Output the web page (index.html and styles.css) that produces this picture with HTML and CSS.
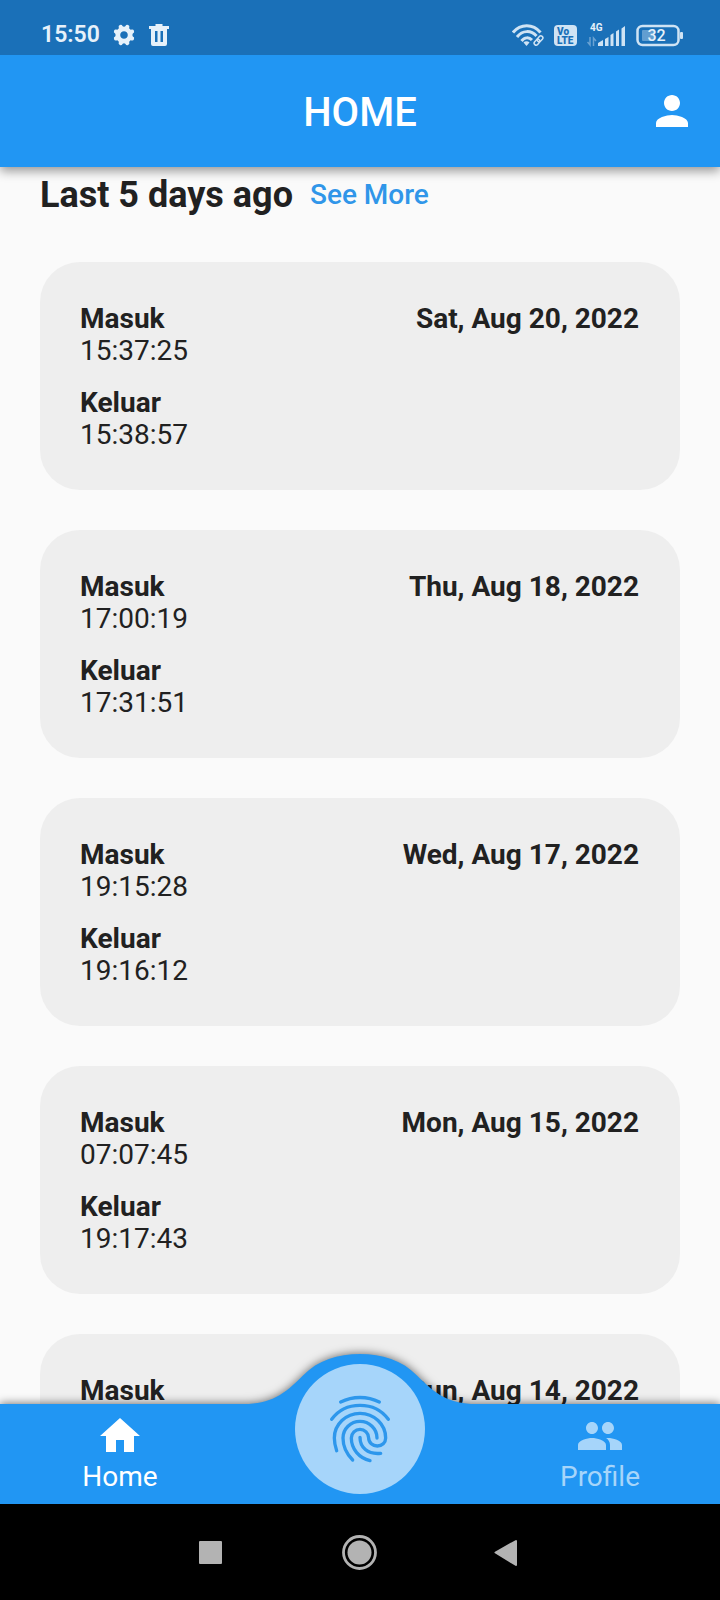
FILE: index.html
```html
<!DOCTYPE html>
<html lang="id">
<head>
<meta charset="utf-8">
<meta name="viewport" content="width=device-width, initial-scale=1">
<title>HOME</title>
<link rel="stylesheet" href="styles.css">
</head>
<body>
<div class="screen">
  <div class="status-bar">
    <div class="status-left">
      <span class="clock">15:50</span>
      <svg width="22" height="24" viewBox="-11 -12 22 24" fill="none" stroke="currentColor" stroke-width="4" stroke-linecap="round" aria-hidden="true">
        <circle r="6.200" stroke-width="4.800"/>
        <path d="M0-8V8M-8 0H8" stroke-dasharray="0.800 14.400 0.800" transform="rotate(22.500)"/>
        <path d="M0-8V8M-8 0H8" stroke-dasharray="0.800 14.400 0.800" transform="rotate(67.500)"/>
        <path d="M0-8V-8.800M0 8V8.800M-8 0H-8.800M8 0H8.800" transform="rotate(22.500)"/>
        <path d="M0-8V-8.800M0 8V8.800M-8 0H-8.800M8 0H8.800" transform="rotate(67.500)"/>
      </svg>
      <svg width="22" height="24" viewBox="0 0 22 24" fill="currentColor" aria-hidden="true">
        <path fill-rule="evenodd" d="M7.500 1h7v2H21v3h-2v15a2 2 0 0 1-2 2H5a2 2 0 0 1-2-2V6H1V3h6.500zM7 8v11h2.500V8zm5.500 0v11H15V8z"/>
      </svg>
    </div>
    <div class="status-right">
      <svg width="32" height="24" viewBox="0 0 32 24" aria-hidden="true">
        <g fill="none" stroke="currentColor" stroke-width="3">
          <path d="M1 9.500C8.500.5 21 .5 28.500 9.500"/>
          <path d="M5 14C10.500 7 19 7 24.500 13"/>
          <path d="M9.500 18C12.500 14 17 14 20 17"/>
        </g>
        <path fill="currentColor" d="M11.500 19.500a4 4 0 0 1 6 0l-3 3.500z"/>
        <g fill="none" stroke="currentColor" stroke-width="1.500" transform="rotate(-48 26.500 17.500)">
          <rect x="21" y="15.500" width="6.500" height="4" rx="2"/>
          <rect x="25.500" y="15.500" width="6.500" height="4" rx="2"/>
        </g>
      </svg>
      <svg width="23" height="24" viewBox="0 0 23 24" aria-hidden="true">
        <rect y="2" width="23" height="21" rx="4" fill="currentColor"/>
        <text class="volte" x="3" y="12">Vo</text>
        <text class="volte" x="3" y="21">LTE</text>
      </svg>
      <svg width="39" height="26" viewBox="0 0 39 26" aria-hidden="true">
        <text class="network" x="3" y="9">4G</text>
        <path fill="none" stroke="currentColor" stroke-width="1.500" opacity=".45" d="M3 15v8l-2.500-3M6.500 24v-8L9 19"/>
        <path fill="currentColor" d="M11 24v-3l5-3v6zM18 17l3.500-2v9H18zM23.500 13l3-2v13h-3zM29 9.500l3-2V24h-3zM34.500 6.500l3.500-2.500v20h-3.500z"/>
      </svg>
      <svg width="47" height="24" viewBox="0 0 47 24" aria-hidden="true">
        <rect x="1.500" y="3" width="41" height="19" rx="5" fill="none" stroke="currentColor" stroke-width="2.500"/>
        <rect x="6" y="7" width="12" height="11" rx="1" fill="currentColor" opacity=".4"/>
        <rect x="44" y="9" width="3" height="7" rx="1" fill="currentColor"/>
        <text class="charge" x="20.500" y="18">32</text>
      </svg>
    </div>
  </div>

  <header class="app-bar">
    <h1 class="app-title">HOME</h1>
    <button class="account" type="button" aria-label="Account">
      <svg width="48" height="48" viewBox="0 0 24 24" fill="currentColor"><path d="M12 12c2.210 0 4-1.790 4-4s-1.790-4-4-4-4 1.790-4 4 1.790 4 4 4zm0 2c-2.670 0-8 1.340-8 4v2h16v-2c0-2.660-5.330-4-8-4z"/></svg>
    </button>
  </header>

  <main class="content">
    <div class="section-head">
      <h2 class="section-title">Last 5 days ago</h2>
      <a class="see-more" href="#">See More</a>
    </div>
    <ul class="records">
      <li class="card">
        <dl class="times">
          <div><dt>Masuk</dt><dd>15:37:25</dd></div>
          <div><dt>Keluar</dt><dd>15:38:57</dd></div>
        </dl>
        <span class="date">Sat, Aug 20, 2022</span>
      </li>
      <li class="card">
        <dl class="times">
          <div><dt>Masuk</dt><dd>17:00:19</dd></div>
          <div><dt>Keluar</dt><dd>17:31:51</dd></div>
        </dl>
        <span class="date">Thu, Aug 18, 2022</span>
      </li>
      <li class="card">
        <dl class="times">
          <div><dt>Masuk</dt><dd>19:15:28</dd></div>
          <div><dt>Keluar</dt><dd>19:16:12</dd></div>
        </dl>
        <span class="date">Wed, Aug 17, 2022</span>
      </li>
      <li class="card">
        <dl class="times">
          <div><dt>Masuk</dt><dd>07:07:45</dd></div>
          <div><dt>Keluar</dt><dd>19:17:43</dd></div>
        </dl>
        <span class="date">Mon, Aug 15, 2022</span>
      </li>
      <li class="card">
        <dl class="times">
          <div><dt>Masuk</dt></div>
        </dl>
        <span class="date">Sun, Aug 14, 2022</span>
      </li>
    </ul>
  </main>

  <nav class="tab-bar">
    <svg class="bump" width="240" height="52" viewBox="0 0 240 52" aria-hidden="true">
      <path fill="currentColor" d="M4 50C30 50 44 41 63 21.500C78 6 98 0 120 0C142 0 162 6 177 21.500C196 41 210 50 236 50V52H4z"/>
    </svg>
    <button class="tab active" type="button">
      <svg width="48" height="48" viewBox="0 0 24 24" fill="currentColor"><path d="M10 20v-6h4v6h5v-8h3L12 3 2 12h3v8z"/></svg>
      <span>Home</span>
    </button>
    <div class="scan-slot">
      <button class="scan" type="button" aria-label="Fingerprint">
        <svg width="70" height="70" viewBox="285 222 210 210" fill="none" stroke="currentColor" stroke-width="10" stroke-linecap="round">
          <path d="M332 246C368 228 412 228 448 246"/>
          <path d="M305 298C345 242 435 242 475 298"/>
          <path d="M320 392C316 380 313 368 313 354C313 313 348 280 390 280C432 280 467 313 467 354C467 368 456 378 442 378C428 378 416 368 416 354C416 340 404 328 390 328C376 328 364 340 364 354C364 388 388 414 420 422"/>
          <path d="M368 420C348 400 339 380 339 354C339 327 362 304 390 304C418 304 441 327 441 354"/>
          <path d="M390 352C390 382 412 404 452 400"/>
        </svg>
      </button>
    </div>
    <button class="tab" type="button">
      <svg width="48" height="48" viewBox="0 0 24 24" fill="currentColor"><path d="M16 11c1.660 0 2.990-1.340 2.990-3S17.660 5 16 5c-1.660 0-3 1.340-3 3s1.340 3 3 3zm-8 0c1.660 0 2.990-1.340 2.990-3S9.660 5 8 5C6.340 5 5 6.340 5 8s1.340 3 3 3zm0 2c-2.330 0-7 1.170-7 3.500V19h14v-2.500c0-2.330-4.670-3.500-7-3.500zm8 0c-.29 0-.62.020-.97.050 1.160.84 1.970 1.970 1.970 3.450V19h6v-2.500c0-2.330-4.670-3.500-7-3.500z"/></svg>
      <span>Profile</span>
    </button>
  </nav>

  <div class="system-bar">
    <button class="key" type="button" aria-label="Recent apps">
      <svg width="48" height="48" viewBox="0 0 48 48" fill="currentColor"><rect x="11" y="13" width="23" height="23" rx="1"/></svg>
    </button>
    <button class="key" type="button" aria-label="Home screen">
      <svg width="48" height="48" viewBox="0 0 48 48"><circle cx="23.500" cy="24.500" r="12" fill="currentColor"/><circle cx="23.500" cy="24.500" r="16" fill="none" stroke="currentColor" stroke-width="2.800"/></svg>
    </button>
    <button class="key" type="button" aria-label="Back">
      <svg width="48" height="48" viewBox="0 0 48 48" fill="currentColor" stroke="currentColor" stroke-width="2" stroke-linejoin="round"><path d="M11.500 24.500L32 13v24z"/></svg>
    </button>
  </div>
</div>
</body>
</html>
```

FILE: styles.css
```css
* {
  box-sizing: border-box;
}

body,
h1,
h2,
ul,
dl,
dd {
  margin: 0;
  padding: 0;
}

body {
  background: #fafafa;
  color: #212121;
  font-family: Roboto, "Liberation Sans", sans-serif;
  font-size: 28px;
  line-height: 32px;
}

button {
  padding: 0;
  border: 0;
  background: none;
  color: inherit;
  font: inherit;
  cursor: pointer;
}

svg {
  display: block;
}

.screen {
  display: flex;
  flex-direction: column;
  height: 100vh;
  overflow: hidden;
}

.status-bar {
  position: relative;
  z-index: 2;
  display: flex;
  flex: none;
  align-items: center;
  justify-content: space-between;
  height: 55px;
  padding: 14px 37px 0 41px;
  background: #1a70b8;
  color: #cfe3f4;
}

.status-left,
.status-right {
  display: flex;
  align-items: center;
}

.status-left {
  gap: 13px;
  color: #e6f1fa;
}

.status-right {
  gap: 10px;
}

.clock {
  font-size: 23px;
  font-weight: 600;
  line-height: 24px;
}

.volte {
  fill: #1a70b8;
  font-size: 10px;
  font-weight: 900;
}

.network {
  fill: #e6f1fa;
  font-size: 10px;
  font-weight: 700;
}

.charge {
  fill: #e6f1fa;
  text-anchor: middle;
  font-size: 16px;
  font-weight: 500;
}

.app-bar {
  position: relative;
  z-index: 1;
  display: grid;
  flex: none;
  grid-template-columns: 1fr auto 1fr;
  align-items: center;
  height: 112px;
  padding: 0 24px;
  background: #2196f3;
  box-shadow: 0 4px 10px rgba(0, 0, 0, 0.4);
  color: #fff;
}

.app-title {
  grid-column: 2;
  padding-top: 3px;
  font-size: 40px;
  font-weight: 500;
  line-height: 48px;
}

.account {
  justify-self: end;
}

.content {
  flex: 1;
  min-height: 0;
  padding: 4px 40px 0;
  overflow-y: auto;
  scrollbar-width: none;
}

.section-head {
  display: flex;
  align-items: center;
  gap: 17px;
  height: 48px;
}

.section-title {
  font-size: 36px;
  font-weight: 700;
  line-height: 40px;
}

.see-more {
  color: #3096e9;
  font-weight: 500;
  text-decoration: none;
}

.records {
  display: flex;
  flex-direction: column;
  gap: 40px;
  margin-top: 43px;
  list-style: none;
}

.card {
  display: flex;
  flex: none;
  align-items: flex-start;
  justify-content: space-between;
  padding: 41px 41px 39px 40px;
  border-radius: 40px;
  background: #eee;
}

.times {
  display: flex;
  flex-direction: column;
  gap: 20px;
}

.times dt,
.date {
  font-weight: 700;
}

.tab-bar {
  position: relative;
  z-index: 1;
  display: grid;
  flex: none;
  grid-template-rows: 100px;
  grid-template-columns: repeat(3, 1fr);
  background: #2196f3;
  filter: drop-shadow(0 -1px 4px rgba(0, 0, 0, 0.5));
  color: #a6d5fa;
}

.bump {
  position: absolute;
  top: -50px;
  left: 50%;
  margin-left: -120px;
  color: #2196f3;
}

.tab {
  display: flex;
  flex-direction: column;
  align-items: center;
  gap: 1px;
  padding-top: 8px;
}

.tab.active {
  color: #fff;
}

.scan-slot {
  position: relative;
  display: flex;
  align-items: flex-end;
  justify-content: center;
  padding-bottom: 10px;
}

.scan {
  display: flex;
  flex: none;
  align-items: center;
  justify-content: center;
  width: 130px;
  height: 130px;
  border-radius: 50%;
  background: #a6d5fa;
  color: #2d97ec;
}

.system-bar {
  position: relative;
  z-index: 2;
  display: flex;
  flex: none;
  align-items: center;
  justify-content: center;
  gap: 100px;
  height: 96px;
  background: #000;
  color: #b3b3b3;
}
```
